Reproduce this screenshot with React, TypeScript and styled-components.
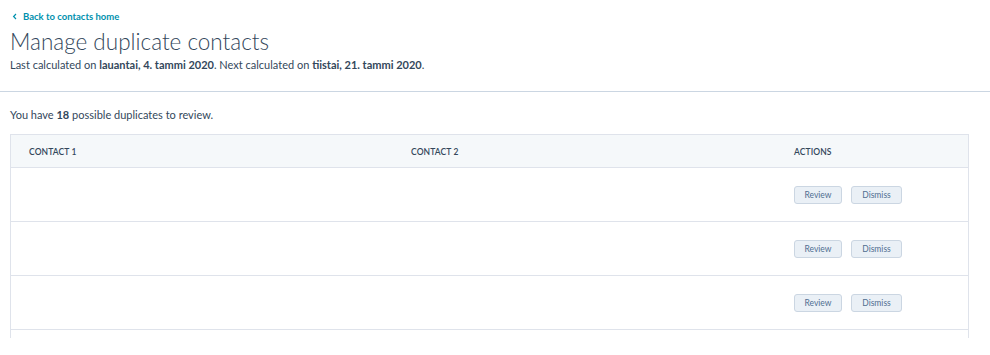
import React from "react";
import styled, { createGlobalStyle } from "styled-components";

const Global = createGlobalStyle`
  html, body { margin: 0; padding: 0; background: #fff; }
  body { font-family: Lato, "Open Sans", "Liberation Sans", sans-serif; color: #33475b; }
  * { box-sizing: border-box; }
`;

const Page = styled.div`
  height: 338px;
  overflow: hidden;
`;

const Header = styled.header`
  padding: 9px 10px 0 10px;
  height: 92px;
  border-bottom: 1px solid #cbd6e2;
`;

const BackLink = styled.a`
  display: flex;
  align-items: center;
  gap: 5px;
  font-size: 9.5px;
  font-weight: 700;
  color: #0091ae;
  text-decoration: none;
  height: 14px;
  padding-left: 2px;
`;

const Title = styled.h1`
  margin: 6px 0 0 0;
  font-size: 22.5px;
  font-weight: 300;
  line-height: 26px;
  color: #33475b;
`;

const Sub = styled.p`
  margin: 2px 0 0 0;
  font-size: 11px;
  line-height: 16px;
  color: #33475b;
  b { font-weight: 700; }
`;

const Main = styled.main`
  padding: 16px 21px 0 10px;
`;

const Summary = styled.p`
  margin: 0 0 12px 0;
  font-size: 11px;
  line-height: 14px;
  color: #33475b;
  b { font-weight: 700; }
`;

const Table = styled.div`
  border: 1px solid #dfe3eb;
  border-bottom: none;
`;

const Row = styled.div<{ $head?: boolean }>`
  display: grid;
  grid-template-columns: 382px 383px 1fr;
  align-items: center;
  height: ${(p) => (p.$head ? "33px" : "54px")};
  background: ${(p) => (p.$head ? "#f5f8fa" : "#fff")};
  border-bottom: 1px solid #dfe3eb;
`;

const TailRow = styled.div`
  height: 20px;
  background: #fff;
`;

const Th = styled.div`
  padding-left: 18px;
  font-size: 8.5px;
  font-weight: 600;
  letter-spacing: 0.1px;
  text-transform: uppercase;
  color: #33475b;
  padding-top: 2px;
`;

const Td = styled.div`
  padding-left: 18px;
  display: flex;
  gap: 9px;
`;

const Btn = styled.button<{ $w: number }>`
  width: ${(p) => p.$w}px;
  height: 18px;
  padding: 0;
  background: #eaf0f6;
  border: 1px solid #cbd6e2;
  border-radius: 3px;
  font-family: inherit;
  font-size: 8.5px;
  color: #506e91;
  cursor: pointer;
`;

const Chevron = () => (
  <svg width="6" height="7" viewBox="0 0 6 7">
    <path d="M4 1 L1.6 3.5 L4 6" fill="none" stroke="#0091ae" strokeWidth="1.2" />
  </svg>
);

export default function App() {
  const rows = [0, 1, 2];
  return (
    <>
      <Global />
      <Page>
        <Header>
          <BackLink href="#">
            <Chevron />
            Back to contacts home
          </BackLink>
          <Title>Manage duplicate contacts</Title>
          <Sub>
            Last calculated on <b>lauantai, 4. tammi 2020</b>. Next calculated on{" "}
            <b>tiistai, 21. tammi 2020</b>.
          </Sub>
        </Header>
        <Main>
          <Summary>
            You have <b>18</b> possible duplicates to review.
          </Summary>
          <Table>
            <Row $head>
              <Th>Contact 1</Th>
              <Th>Contact 2</Th>
              <Th>Actions</Th>
            </Row>
            {rows.map((r) => (
              <Row key={r}>
                <Td />
                <Td />
                <Td>
                  <Btn $w={48}>Review</Btn>
                  <Btn $w={51}>Dismiss</Btn>
                </Td>
              </Row>
            ))}
            <TailRow />
          </Table>
        </Main>
      </Page>
    </>
  );
}
